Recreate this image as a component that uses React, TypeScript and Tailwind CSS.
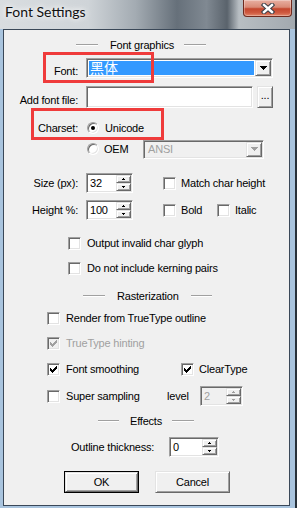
import type { ReactNode } from 'react'

// classic 3D borders (non-themed Win32 controls)
const sunken =
  'border border-t-[#a0a0a0] border-l-[#a0a0a0] border-r-white border-b-white shadow-[inset_1px_1px_0_#696969,inset_-1px_-1px_0_#e3e3e3]'
const raised =
  'bg-[#f0f0f0] border border-t-[#e3e3e3] border-l-[#e3e3e3] border-r-[#696969] border-b-[#696969] shadow-[inset_1px_1px_0_#ffffff,inset_-1px_-1px_0_#a0a0a0]'

const CHECK_PIXELS = [
  [6, 0], [5, 1], [6, 1], [0, 2], [4, 2], [5, 2], [6, 2],
  [0, 3], [1, 3], [3, 3], [4, 3], [5, 3],
  [0, 4], [1, 4], [2, 4], [3, 4], [4, 4],
  [1, 5], [2, 5], [3, 5], [2, 6]
]

function Check({ checked, disabled }: { checked?: boolean; disabled?: boolean }) {
  return (
    <div className={`w-[13px] h-[13px] shrink-0 flex items-center justify-center ${sunken} ${disabled ? 'bg-[#f0f0f0]' : 'bg-white'}`}>
      {checked && (
        <svg width="7" height="7" viewBox="0 0 7 7" shapeRendering="crispEdges">
          {CHECK_PIXELS.map(([x, y], i) => (
            <rect key={i} x={x} y={y} width="1" height="1" fill={disabled ? '#a0a0a0' : '#000'} />
          ))}
        </svg>
      )}
    </div>
  )
}

function Radio({ on }: { on?: boolean }) {
  return (
    <div className="w-[12px] h-[12px] shrink-0 rounded-full bg-white border border-t-[#a0a0a0] border-l-[#a0a0a0] border-r-white border-b-white shadow-[inset_1px_1px_0_#696969,inset_-1px_-1px_0_#e3e3e3] flex items-center justify-center">
      {on && <div className="w-[4px] h-[4px] rounded-full bg-black" />}
    </div>
  )
}

function Tri({ up, color }: { up?: boolean; color: string }) {
  return (
    <svg width="3" height="2" viewBox="0 0 3 2" shapeRendering="crispEdges">
      <rect x="1" y={up ? 0 : 1} width="1" height="1" fill={color} />
      <rect x="0" y={up ? 1 : 0} width="3" height="1" fill={color} />
    </svg>
  )
}

function Spin({ value, width, disabled }: { value: string; width: string; disabled?: boolean }) {
  const c = disabled ? '#a0a0a0' : '#000'
  return (
    <div className={`h-[20px] ${width} flex p-[1px] ${sunken} ${disabled ? 'bg-[#f0f0f0] text-[#a0a0a0]' : 'bg-white'}`}>
      <div className="flex-1 flex items-center pl-[2px]">{value}</div>
      <div className="w-[15px] flex flex-col">
        <div className={`flex-1 flex items-center justify-center ${raised}`}>
          <Tri up color={c} />
        </div>
        <div className={`flex-1 flex items-center justify-center ${raised}`}>
          <Tri color={c} />
        </div>
      </div>
    </div>
  )
}

function DropBtn({ disabled }: { disabled?: boolean }) {
  const c = disabled ? '#a0a0a0' : '#000'
  return (
    <div className={`w-[16px] h-full flex items-center justify-center ${raised}`}>
      <svg width="7" height="4" viewBox="0 0 7 4" shapeRendering="crispEdges">
        <rect x="0" y="0" width="7" height="1" fill={c} />
        <rect x="1" y="1" width="5" height="1" fill={c} />
        <rect x="2" y="2" width="3" height="1" fill={c} />
        <rect x="3" y="3" width="1" height="1" fill={c} />
      </svg>
    </div>
  )
}

function Label({ children, low }: { children: ReactNode; low?: boolean }) {
  return <div className={`w-[74px] shrink-0 text-right ${low ? 'mt-[6px]' : ''}`}>{children}</div>
}

function Line({ width }: { width: string }) {
  return <div className={`${width} h-0 border-t border-t-[#a0a0a0] border-b border-b-white`} />
}

export default function App() {
  return (
    <div className="w-[297px] h-[508px] flex flex-col overflow-hidden bg-[#a9c4de] border-r-[2px] border-r-[#28313a] font-['Liberation_Sans','Noto_Sans_CJK_SC',sans-serif] text-[11px] leading-[13px] tracking-[-0.2px] text-black">
      {/* title bar */}
      <div className="h-[29px] shrink-0 flex items-start bg-[linear-gradient(to_right,#d9dde0_0%,#cfd4d8_30%,#a3abb2_46%,#66707a_60%,#808992_70%,#5a636c_77%,#b8bec3_81%,#a2a9af_100%)]">
        <div className="pl-[5px] pt-[3px] font-['Lato',sans-serif] text-[14px] leading-[17px] tracking-normal text-[#111] [text-shadow:0_0_5px_#fff,0_0_8px_#fff]">
          Font Settings
        </div>
        <div className="ml-auto mr-[3px] w-[49px] h-[17px] rounded-b-[4px] border border-t-0 border-[#6e2a1e] bg-[linear-gradient(to_bottom,#e8b0a2_0%,#d98a76_45%,#c4462d_55%,#cf5a40_80%,#e2876b_100%)] shadow-[inset_0_0_0_1px_rgba(255,255,255,0.3)] flex items-center justify-center">
          <svg width="14" height="11" viewBox="0 0 14 11">
            <path d="M3 2 L11 9 M11 2 L3 9" stroke="#3b3f48" strokeWidth="4.5" strokeLinecap="square" />
            <path d="M3 2 L11 9 M11 2 L3 9" stroke="#ffffff" strokeWidth="2.4" strokeLinecap="square" />
          </svg>
        </div>
      </div>

      {/* client area */}
      <div className="ml-[3px] w-[287px] h-[477px] shrink-0 relative flex flex-col border border-[#3a4858] bg-[#f0f0f0]">
        <div className="mt-[8px] h-[14px] flex items-center pl-[72px]">
          <Line width="w-[22px]" />
          <span className="ml-[12px]">Font graphics</span>
          <div className="ml-[10px]"><Line width="w-[22px]" /></div>
        </div>

        <div className="mt-[6px] h-[20px] flex items-center">
          <Label low>Font:</Label>
          <div className={`ml-[8px] w-[187px] h-[20px] flex p-[1px] bg-white ${sunken}`}>
            <div className="flex-1 p-[1px]">
              <div className="h-full bg-[#3399ff] text-white text-[14px] tracking-normal flex items-center pl-[1px]">黑体</div>
            </div>
            <DropBtn />
          </div>
        </div>

        <div className="mt-[8px] h-[22px] flex items-center">
          <Label low>Add font file:</Label>
          <div className={`ml-[8px] w-[167px] h-[22px] bg-white ${sunken}`} />
          <div className={`ml-[4px] w-[16px] h-[22px] flex items-end justify-center pb-[5px] ${raised}`}>...</div>
        </div>

        <div className="mt-[12px] h-[16px] flex items-center">
          <Label>Charset:</Label>
          <div className="ml-[9px]"><Radio on /></div>
          <span className="ml-[6px]">Unicode</span>
        </div>

        <div className="mt-[3px] h-[20px] flex items-center pl-[83px]">
          <Radio />
          <span className="ml-[5px] w-[39px]">OEM</span>
          <div className={`w-[121px] h-[19px] flex p-[1px] bg-[#f0f0f0] ${sunken}`}>
            <div className="flex-1 flex items-center pl-[3px] text-[#a0a0a0]">ANSI</div>
            <DropBtn disabled />
          </div>
        </div>

        <div className="mt-[14px] h-[20px] flex items-center">
          <Label>Size (px):</Label>
          <div className="ml-[8px]"><Spin value="32" width="w-[47px]" /></div>
          <div className="ml-[30px]"><Check /></div>
          <span className="ml-[5px]">Match char height</span>
        </div>

        <div className="mt-[7px] h-[20px] flex items-center">
          <Label>Height %:</Label>
          <div className="ml-[8px]"><Spin value="100" width="w-[47px]" /></div>
          <div className="ml-[30px]"><Check /></div>
          <span className="ml-[5px] w-[36px]">Bold</span>
          <Check />
          <span className="ml-[5px]">Italic</span>
        </div>

        <div className="mt-[15px] h-[16px] flex items-center pl-[64px]">
          <Check />
          <span className="ml-[6px]">Output invalid char glyph</span>
        </div>

        <div className="mt-[9px] h-[16px] flex items-center pl-[64px]">
          <Check />
          <span className="ml-[6px]">Do not include kerning pairs</span>
        </div>

        <div className="mt-[13px] h-[14px] flex items-center pl-[79px]">
          <Line width="w-[22px]" />
          <span className="ml-[12px]">Rasterization</span>
          <div className="ml-[12px]"><Line width="w-[21px]" /></div>
        </div>

        <div className="mt-[7px] h-[16px] flex items-center pl-[43px]">
          <Check />
          <span className="ml-[6px]">Render from TrueType outline</span>
        </div>

        <div className="mt-[9px] h-[16px] flex items-center pl-[43px]">
          <Check checked disabled />
          <span className="ml-[6px] text-[#a0a0a0]">TrueType hinting</span>
        </div>

        <div className="mt-[10px] h-[16px] flex items-center pl-[43px]">
          <Check checked />
          <span className="ml-[6px] w-[115px]">Font smoothing</span>
          <Check checked />
          <span className="ml-[5px]">ClearType</span>
        </div>

        <div className="mt-[9px] h-[20px] flex items-center pl-[43px]">
          <Check />
          <span className="ml-[6px] w-[101px]">Super sampling</span>
          <span className="w-[33px]">level</span>
          <Spin value="2" width="w-[43px]" disabled />
        </div>

        <div className="mt-[8px] h-[14px] flex items-center pl-[94px]">
          <Line width="w-[21px]" />
          <span className="ml-[11px]">Effects</span>
          <div className="ml-[10px]"><Line width="w-[22px]" /></div>
        </div>

        <div className="mt-[9px] h-[20px] flex items-center pl-[67px]">
          <span className="w-[98px]">Outline thickness:</span>
          <Spin value="0" width="w-[50px]" />
        </div>

        <div className="mt-[14px] h-[22px] flex items-center pl-[60px]">
          <div className="w-[75px] h-[22px] border border-black">
            <div className={`w-full h-full flex items-center justify-center ${raised}`}>OK</div>
          </div>
          <div className={`ml-[16px] w-[75px] h-[22px] flex items-center justify-center ${raised}`}>Cancel</div>
        </div>

        {/* red annotation boxes */}
        <div className="absolute left-[39px] top-[22px] w-[111px] h-[31px] border-[3px] border-[#ef3b3b]" />
        <div className="absolute left-[27px] top-[78px] w-[133px] h-[32px] border-[3px] border-[#ef3b3b]" />
      </div>
    </div>
  )
}
